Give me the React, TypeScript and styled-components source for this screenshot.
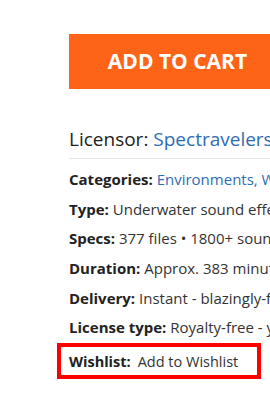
import React from 'react';
import styled, { createGlobalStyle } from 'styled-components';

const GlobalStyle = createGlobalStyle`
  body {
    margin: 0;
    background: #fff;
    font-family: 'Open Sans', 'Noto Sans', sans-serif;
    overflow: hidden;
  }
`;

interface Detail {
  label: string;
  value: string;
  link?: boolean;
}

const details: Detail[] = [
  { label: 'Categories:', value: 'Environments, Water, Underwater', link: true },
  { label: 'Type:', value: 'Underwater sound effects library' },
  { label: 'Specs:', value: '377 files • 1800+ sounds • 96 kHz / 24 bit' },
  { label: 'Duration:', value: 'Approx. 383 minutes' },
  { label: 'Delivery:', value: 'Instant - blazingly-fast download' },
  { label: 'License type:', value: 'Royalty-free - yours to use forever' },
];

const App: React.FC = () => {
  return (
    <Page>
      <GlobalStyle />
      <CartButton>ADD TO CART</CartButton>
      <Licensor>
        Licensor: <a href="#">Spectravelers</a>
      </Licensor>
      <DetailList>
        {details.map((d) => (
          <DetailRow key={d.label}>
            <strong>{d.label}</strong> {d.link ? <a href="#">{d.value}</a> : d.value}
          </DetailRow>
        ))}
        <WishlistRow>
          <strong>Wishlist:</strong>
          <span>Add to Wishlist</span>
        </WishlistRow>
      </DetailList>
    </Page>
  );
};

export default App;

const Page = styled.div`
  width: 270px;
  height: 396px;
  overflow: hidden;
  padding: 34px 0 0 69px;
  box-sizing: border-box;
  display: flex;
  flex-direction: column;
`;

const CartButton = styled.button`
  all: unset;
  box-sizing: border-box;
  flex: none;
  width: 217px;
  height: 55px;
  background: #fe6418;
  color: #fff;
  font-family: 'Open Sans', sans-serif;
  font-weight: 700;
  font-size: 21px;
  text-align: center;
  line-height: 55px;
  white-space: nowrap;
`;

const Licensor = styled.div`
  margin-top: 37px;
  width: 260px;
  font-size: 19px;
  color: #222;
  white-space: nowrap;
  padding-bottom: 6px;
  line-height: 26px;
  border-bottom: 1px solid #e6e6e6;

  a {
    color: #2f6db3;
    text-decoration: none;
  }
`;

const DetailList = styled.div`
  display: flex;
  flex-direction: column;
  margin-top: 6px;
`;

const DetailRow = styled.div`
  height: 29.7px;
  line-height: 29.7px;
  font-size: 15px;
  color: #333;
  white-space: nowrap;

  strong {
    color: #222;
    font-weight: 700;
  }

  a {
    color: #2f6db3;
    text-decoration: none;
  }
`;

const WishlistRow = styled.div`
  box-sizing: border-box;
  margin: 0 0 0 -12px;
  width: 204px;
  height: 36px;
  border: 4px solid #ff0000;
  padding-left: 8px;
  display: flex;
  align-items: center;
  gap: 7px;
  font-size: 14.5px;
  color: #333;
  white-space: nowrap;

  strong {
    color: #222;
    font-weight: 700;
  }
`;
